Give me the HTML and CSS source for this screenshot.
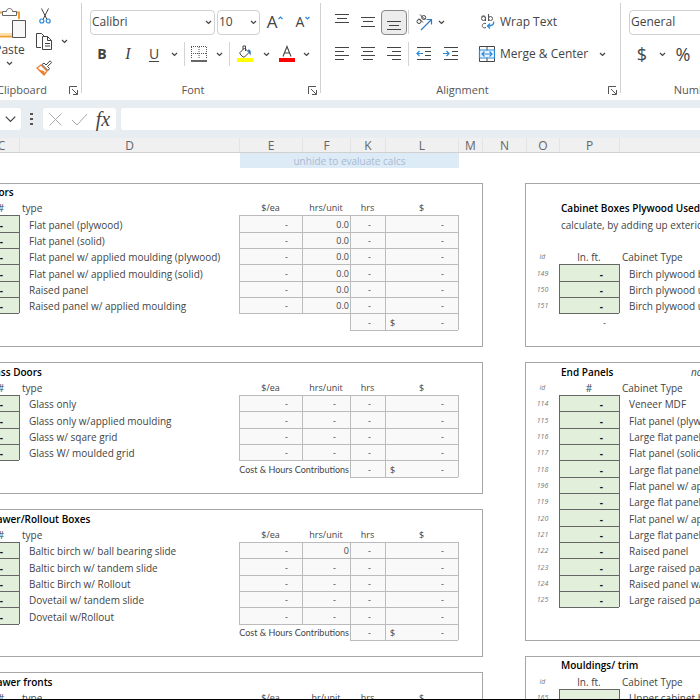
FILE: index.html
```html
<!DOCTYPE html>
<html lang="en">
<head>
<meta charset="utf-8">
<title>Cabinet estimate</title>
<link rel="stylesheet" href="styles.css">
</head>
<body>
<svg class="sprite" aria-hidden="true">
  <symbol id="chev" viewBox="0 0 7 5"><path d="M1 1l2.500 2.500L6 1" fill="none" stroke="#444" stroke-width="1.200"/></symbol>
  <symbol id="launch" viewBox="0 0 9 9"><path d="M.5 8V.5H8M3 3l5 5M8.500 4v4.500H4" fill="none" stroke="#555"/></symbol>
</svg>
<header class="ribbon">
  <section class="group clipboard">
    <div class="clip-tools">
      <button class="paste" aria-label="Paste">
        <svg width="33" height="32" viewBox="0 0 33 32"><path d="M2 6h24v24H2z" fill="#fff"/><path d="M9 5.500H1.500v24H19M22 5.500h4V12" fill="none" stroke="#f0a030" stroke-width="2"/><path d="M4 8v19h15" fill="none" stroke="#fbe0ae" stroke-width="2"/><path d="M9.500 8.500v-4h4c0-4 6-4 6 0h4v4z" fill="#fff" stroke="#666"/><path d="M19.500 13.500h13v17h-13z" fill="#f8f8f8" stroke="#555"/></svg>
        <span>Paste</span>
        <svg width="7" height="5"><use href="#chev"/></svg>
      </button>
      <div class="clip-side">
        <button aria-label="Cut"><svg width="12" height="16" viewBox="0 0 12 16"><path d="M2.500.5l5.500 11M9.500.5L4 11.500" fill="none" stroke="#444"/><circle cx="2.800" cy="13" r="2" fill="none" stroke="#2b88d8" stroke-width="1.200"/><circle cx="9.200" cy="13" r="2" fill="none" stroke="#2b88d8" stroke-width="1.200"/></svg></button>
        <button class="copy" aria-label="Copy"><svg width="17" height="17" viewBox="0 0 17 17"><path d="M5 14.500H.5V.5h5L8 3" fill="none" stroke="#444"/><path d="M6.500 3.500h5l4 4v9h-9z" fill="#fff" stroke="#444"/><path d="M11.500 3.500v4h4M9 10.500h5M9 13h5" fill="none" stroke="#444"/></svg><svg width="7" height="5"><use href="#chev"/></svg></button>
        <button aria-label="Format Painter"><svg width="17" height="16" viewBox="0 0 17 16"><path d="M1 8l7 7 3-4-6-6z" fill="#fff" stroke="#ed7d31" stroke-width="1.300"/><path d="M2 9.500l6 1.500 1 3-1 1z" fill="#ed7d31"/><path d="M6 4.500L8 3l2 2 4-4.200L15.700 2.500 11.500 6.500l2 2-1.500 2z" fill="#fff" stroke="#444"/></svg></button>
      </div>
    </div>
    <footer><span>Clipboard</span><button aria-label="Clipboard settings"><svg width="9" height="9"><use href="#launch"/></svg></button></footer>
  </section>

  <section class="group font">
    <div class="row">
      <label class="pick family"><select aria-label="Font"><option>Calibri</option></select><svg width="7" height="5"><use href="#chev"/></svg></label>
      <label class="pick size"><select aria-label="Font size"><option>10</option></select><svg width="7" height="5"><use href="#chev"/></svg></label>
      <button class="w28 grow-a" aria-label="Increase font size">A<svg width="5" height="4" viewBox="0 0 5 4"><path d="M.5 3l2-2 2 2" fill="none" stroke="#2b88d8" stroke-width="1.200"/></svg></button>
      <button class="w28 shrink-a" aria-label="Decrease font size">A<svg width="5" height="4" viewBox="0 0 5 4"><path d="M.5 1l2 2 2-2" fill="none" stroke="#2b88d8" stroke-width="1.200"/></svg></button>
    </div>
    <div class="row">
      <button class="w26 bold">B</button><button class="w26 italic">I</button><button class="w26 under">U</button>
      <button class="w14" aria-label="Underline styles"><svg width="7" height="5"><use href="#chev"/></svg></button><i class="sep"></i>
      <button class="w20" aria-label="Borders"><svg width="16" height="16" viewBox="0 0 16 16"><path d="M.5 1v12M8 1v12M15.500 1v12M0 .5h16M0 7.500h16" fill="none" stroke="#555" stroke-dasharray="1 1"/><path d="M0 15h16" stroke="#333" stroke-width="1.500"/></svg></button>
      <button class="w20" aria-label="Border styles"><svg width="7" height="5"><use href="#chev"/></svg></button><i class="sep thin"></i>
      <button class="w28" aria-label="Fill color"><svg width="16" height="16" viewBox="0 0 16 16"><path d="M0 12h16v4H0z" fill="#ff0"/><path d="M3 6.500L7.500 2l4.500 4.500L7.500 11H6L3 8z" fill="#fff" stroke="#444"/><path d="M6 3.500V0h2.500v5" fill="none" stroke="#444"/><path d="M11 3.500c3 0 3 2.500 2.500 6L11.500 6z" fill="#1f6fb5"/></svg></button>
      <button class="w14" aria-label="Fill colors"><svg width="7" height="5"><use href="#chev"/></svg></button>
      <button class="w28" aria-label="Font color"><svg width="16" height="16" viewBox="0 0 16 16"><path d="M0 12h16v4H0z" fill="red"/><path d="M4 10.500L8 .5l4 10M5.300 7h5.400" fill="none" stroke="#444" stroke-width="1.100"/></svg></button>
      <button class="w10" aria-label="Font colors"><svg width="7" height="5"><use href="#chev"/></svg></button>
    </div>
    <footer><span>Font</span><button aria-label="Font settings"><svg width="9" height="9"><use href="#launch"/></svg></button></footer>
  </section>

  <section class="group align">
    <div class="cols">
      <div class="stack">
        <div class="row">
          <button class="w26" aria-label="Top align"><svg class="up" width="16" height="16" viewBox="0 0 16 16"><path d="M1 3.500h14M3 7.500h10M1 11.500h14" stroke="#444"/></svg></button>
          <button class="w26" aria-label="Middle align"><svg width="16" height="16" viewBox="0 0 16 16"><path d="M1 3.500h14M3 7.500h10M1 12.500h14" stroke="#444"/></svg></button>
          <button class="w26 pressed" aria-label="Bottom align"><svg width="16" height="16" viewBox="0 0 16 16"><path d="M1 7.500h14M3 11.500h10M1 15.500h14" stroke="#444"/></svg></button><i class="sep thin"></i>
          <button class="w28" aria-label="Orientation"><svg width="18" height="17" viewBox="0 0 18 17"><g fill="none" stroke="#444"><circle cx="4" cy="7.500" r="2"/><path d="M4 4.500l4 4M5 .5l5 5"/><circle cx="8.700" cy="3.500" r="2"/></g><path d="M6 16L16 6M11.500 5.500h5v5" fill="none" stroke="#2b7cc0" stroke-width="1.200"/></svg></button>
          <button aria-label="Orientations"><svg width="7" height="5"><use href="#chev"/></svg></button>
        </div>
        <div class="row">
          <button class="w26" aria-label="Align left"><svg width="16" height="16" viewBox="0 0 16 16"><path d="M1 1.500h14M1 5.500h9M1 9.500h14M1 13.500h9" stroke="#444"/></svg></button>
          <button class="w26" aria-label="Center"><svg width="16" height="16" viewBox="0 0 16 16"><path d="M1 1.500h14M3 5.500h10M1 9.500h14M3 13.500h10" stroke="#444"/></svg></button>
          <button class="w26" aria-label="Align right"><svg width="16" height="16" viewBox="0 0 16 16"><path d="M1 1.500h14M6 5.500h9M1 9.500h14M6 13.500h9" stroke="#444"/></svg></button><i class="sep thin"></i>
          <button class="w28" aria-label="Decrease indent"><svg width="16" height="16" viewBox="0 0 16 16"><path d="M1 1.500h14M9 5.500h6M9 9.500h6M1 13.500h14" stroke="#444"/><path d="M7 7.500H1M3.500 5L1 7.500 3.500 10" fill="none" stroke="#2b88d8" stroke-width="1.200"/></svg></button>
          <button class="w26" aria-label="Increase indent"><svg width="16" height="16" viewBox="0 0 16 16"><path d="M1 1.500h14M9 5.500h6M9 9.500h6M1 13.500h14" stroke="#444"/><path d="M0 7.500h6M3.500 5L6 7.500 3.500 10" fill="none" stroke="#2b88d8" stroke-width="1.200"/></svg></button>
        </div>
      </div>
      <div class="stack wrap">
        <div class="row"><button class="text"><svg width="16" height="16" viewBox="0 0 16 16"><g fill="none" stroke="#555"><circle cx="4.500" cy="4.500" r="2"/><path d="M2.500 2.500c1.500-1 4-1 4 1V7M9.500 0v7M7 9.500c-5-1.500-5 6 0 4"/><circle cx="11.500" cy="4.500" r="2"/></g><path d="M14.500 7.500c1 3-2 4.500-6 4.500M11 9.500L8.500 12l2.500 2.500" fill="none" stroke="#2b88d8" stroke-width="1.300"/></svg>Wrap Text</button></div>
        <div class="row"><button class="text"><svg width="16" height="16" viewBox="0 0 16 16"><path d="M1 4.500h14v7H1z" fill="#e9f4fd"/><path d="M.5.5h15v15H.5zM8 .5v4M8 11.500v4" fill="none" stroke="#444"/><path d="M.5 4h15v8H.5zM3 8h10M5.500 5.500L3 8l2.500 2.500M10.500 5.500L13 8l-2.500 2.500" fill="none" stroke="#2b88d8" stroke-width="1.200"/></svg>Merge &amp; Center</button><button class="w28" aria-label="Merge options"><svg width="7" height="5"><use href="#chev"/></svg></button></div>
      </div>
    </div>
    <footer><span>Alignment</span><button aria-label="Alignment settings"><svg width="9" height="9"><use href="#launch"/></svg></button></footer>
  </section>

  <section class="group number">
    <div class="row"><label class="pick format"><select aria-label="Number format"><option>General</option></select></label></div>
    <div class="row"><button class="w26 sign">$</button><button class="w14" aria-label="Currencies"><svg width="7" height="5"><use href="#chev"/></svg></button><button class="w28 sign">%</button></div>
    <footer><span>Number</span></footer>
  </section>
</header>

<div class="formula">
  <button class="name" aria-label="Name box"><svg width="11" height="8" viewBox="0 0 7 5"><path d="M.5 1l3 3 3-3" fill="none" stroke="#444" stroke-width=".8"/></svg></button>
  <svg class="dots" width="3" height="12" viewBox="0 0 3 12"><path d="M0 0h3v2H0zM0 5h3v2H0zM0 10h3v2H0z" fill="#555"/></svg>
  <div class="entry">
    <button aria-label="Cancel"><svg width="13" height="13" viewBox="0 0 13 13"><path d="M.5.5l12 12M12.500.5l-12 12" stroke="#aaa"/></svg></button>
    <button aria-label="Enter"><svg width="17" height="13" viewBox="0 0 17 13"><path d="M1 7l5 5L16 1" fill="none" stroke="#aaa"/></svg></button>
    <button class="fx">fx</button>
  </div>
  <input aria-label="Formula" type="text">
</div>

<div class="letters"><span class="c">C</span><span class="d">D</span><span class="e">E</span><span class="f">F</span><span class="k">K</span><span class="l">L</span><span class="m">M</span><span class="n">N</span><span class="o">O</span><span class="p">P</span></div>

<main class="sheet">
  <div class="left">
    <div class="banner">unhide to evaluate calcs</div>

    <div class="panel">
      <table class="calc s3">
        <colgroup><col class="c"><col class="d"><col class="e"><col class="f"><col class="k"><col class="l"><col class="m"></colgroup>
        <tr><th class="title" colspan="7">Doors</th></tr>
        <tr class="head"><th>#</th><th class="type">type</th><th>$/ea</th><th>hrs/unit</th><th>hrs</th><th>$</th><th></th></tr>
        <tr class="item"><td>-</td><td>Flat panel (plywood)</td><td>-</td><td class="num">0.0</td><td>-</td><td>-</td><td></td></tr>
        <tr class="item"><td>-</td><td>Flat panel (solid)</td><td>-</td><td class="num">0.0</td><td>-</td><td>-</td><td></td></tr>
        <tr class="item"><td>-</td><td>Flat panel w/ applied moulding (plywood)</td><td>-</td><td class="num">0.0</td><td>-</td><td>-</td><td></td></tr>
        <tr class="item"><td>-</td><td>Flat panel w/ applied moulding (solid)</td><td>-</td><td class="num">0.0</td><td>-</td><td>-</td><td></td></tr>
        <tr class="item"><td>-</td><td>Raised panel</td><td>-</td><td class="num">0.0</td><td>-</td><td>-</td><td></td></tr>
        <tr class="item"><td>-</td><td>Raised panel w/ applied moulding</td><td>-</td><td class="num">0.0</td><td>-</td><td>-</td><td></td></tr>
        <tr class="total"><td></td><td></td><td class="blank" colspan="2"></td><td>-</td><td><div><span>$</span><span>-</span></div></td><td></td></tr>
        <tr class="end"><td colspan="4"></td><td colspan="2"></td><td></td></tr>
      </table>
    </div>

    <div class="panel">
      <table class="calc s1">
        <colgroup><col class="c"><col class="d"><col class="e"><col class="f"><col class="k"><col class="l"><col class="m"></colgroup>
        <tr><th class="title" colspan="7">Glass Doors</th></tr>
        <tr class="head"><th>#</th><th class="type">type</th><th>$/ea</th><th>hrs/unit</th><th>hrs</th><th>$</th><th></th></tr>
        <tr class="item"><td>-</td><td>Glass only</td><td>-</td><td>-</td><td>-</td><td>-</td><td></td></tr>
        <tr class="item"><td>-</td><td>Glass only w/applied moulding</td><td>-</td><td>-</td><td>-</td><td>-</td><td></td></tr>
        <tr class="item"><td>-</td><td>Glass w/ sqare grid</td><td>-</td><td>-</td><td>-</td><td>-</td><td></td></tr>
        <tr class="item"><td>-</td><td>Glass W/ moulded grid</td><td>-</td><td>-</td><td>-</td><td>-</td><td></td></tr>
        <tr class="total"><td></td><td></td><td colspan="2">Cost &amp; Hours Contributions</td><td>-</td><td><div><span>$</span><span>-</span></div></td><td></td></tr>
        <tr class="end"><td colspan="4"></td><td colspan="2"></td><td></td></tr>
      </table>
    </div>

    <div class="panel">
      <table class="calc s1">
        <colgroup><col class="c"><col class="d"><col class="e"><col class="f"><col class="k"><col class="l"><col class="m"></colgroup>
        <tr><th class="title" colspan="7">Drawer/Rollout Boxes</th></tr>
        <tr class="head"><th>#</th><th class="type">type</th><th>$/ea</th><th>hrs/unit</th><th>hrs</th><th>$</th><th></th></tr>
        <tr class="item"><td>-</td><td>Baltic birch w/ ball bearing slide</td><td>-</td><td class="num">0</td><td>-</td><td>-</td><td></td></tr>
        <tr class="item"><td>-</td><td>Baltic birch w/ tandem slide</td><td>-</td><td>-</td><td>-</td><td>-</td><td></td></tr>
        <tr class="item"><td>-</td><td>Baltic Birch w/ Rollout</td><td>-</td><td>-</td><td>-</td><td>-</td><td></td></tr>
        <tr class="item"><td>-</td><td>Dovetail w/ tandem slide</td><td>-</td><td>-</td><td>-</td><td>-</td><td></td></tr>
        <tr class="item"><td>-</td><td>Dovetail w/Rollout</td><td>-</td><td>-</td><td>-</td><td>-</td><td></td></tr>
        <tr class="total"><td></td><td></td><td colspan="2">Cost &amp; Hours Contributions</td><td>-</td><td><div><span>$</span><span>-</span></div></td><td></td></tr>
        <tr class="end"><td colspan="4"></td><td colspan="2"></td><td></td></tr>
      </table>
    </div>

    <div class="panel">
      <table class="calc s1">
        <colgroup><col class="c"><col class="d"><col class="e"><col class="f"><col class="k"><col class="l"><col class="m"></colgroup>
        <tr><th class="title" colspan="7">Drawer fronts</th></tr>
        <tr class="head"><th>#</th><th class="type">type</th><th>$/ea</th><th>hr/unit</th><th>hrs</th><th>$</th><th></th></tr>
      </table>
    </div>
  </div>

  <div class="right">
    <div class="panel">
      <table class="list s3">
        <colgroup><col class="o"><col class="p"><col class="q"><col></colgroup>
        <tr><td colspan="4"></td></tr>
        <tr><td></td><th class="title" colspan="3">Cabinet Boxes Plywood Used</th></tr>
        <tr><td></td><td class="hint" colspan="3">calculate, by adding up exterior</td></tr>
        <tr><td colspan="4"></td></tr>
        <tr class="head"><th class="id">id</th><th>ln. ft.</th><th class="type" colspan="2">Cabinet Type</th></tr>
        <tr class="item"><td>149</td><td>-</td><td colspan="2">Birch plywood base</td></tr>
        <tr class="item"><td>150</td><td>-</td><td colspan="2">Birch plywood upper</td></tr>
        <tr class="item"><td>151</td><td>-</td><td colspan="2">Birch plywood utility</td></tr>
        <tr class="sum"><td></td><td>-</td><td colspan="2"></td></tr>
        <tr><td colspan="4"></td></tr>
      </table>
    </div>

    <div class="panel">
      <table class="list s1">
        <colgroup><col class="o"><col class="p"><col class="q"><col></colgroup>
        <tr><td></td><th class="title" colspan="2">End Panels</th><td class="note">note</td></tr>
        <tr class="head"><th class="id">id</th><th>#</th><th class="type" colspan="2">Cabinet Type</th></tr>
        <tr class="item"><td>114</td><td>-</td><td colspan="2">Veneer MDF</td></tr>
        <tr class="item"><td>115</td><td>-</td><td colspan="2">Flat panel (plywood)</td></tr>
        <tr class="item"><td>116</td><td>-</td><td colspan="2">Large flat panel (plywood)</td></tr>
        <tr class="item"><td>117</td><td>-</td><td colspan="2">Flat panel (solid)</td></tr>
        <tr class="item"><td>118</td><td>-</td><td colspan="2">Large flat panel (solid)</td></tr>
        <tr class="item"><td>196</td><td>-</td><td colspan="2">Flat panel w/ applied moulding</td></tr>
        <tr class="item"><td>119</td><td>-</td><td colspan="2">Large flat panel w/ applied moulding</td></tr>
        <tr class="item"><td>120</td><td>-</td><td colspan="2">Flat panel w/ applied moulding</td></tr>
        <tr class="item"><td>121</td><td>-</td><td colspan="2">Large flat panel w/ applied moulding</td></tr>
        <tr class="item"><td>122</td><td>-</td><td colspan="2">Raised panel</td></tr>
        <tr class="item"><td>123</td><td>-</td><td colspan="2">Large raised panel</td></tr>
        <tr class="item"><td>124</td><td>-</td><td colspan="2">Raised panel w/ applied moulding</td></tr>
        <tr class="item"><td>125</td><td>-</td><td colspan="2">Large raised panel w/ applied moulding</td></tr>
        <tr class="sum"><td></td><td></td><td colspan="2"></td></tr>
        <tr><td colspan="4"></td></tr>
      </table>
    </div>

    <div class="panel">
      <table class="list s2">
        <colgroup><col class="o"><col class="p"><col class="q"><col></colgroup>
        <tr><td></td><th class="title" colspan="3">Mouldings/ trim</th></tr>
        <tr class="head"><th class="id">id</th><th>ln. ft.</th><th class="type" colspan="2">Cabinet Type</th></tr>
        <tr class="item"><td>165</td><td>-</td><td colspan="2">Upper cabinet base</td></tr>
      </table>
    </div>
  </div>
</main>
</body>
</html>
```

FILE: styles.css
```css
* { box-sizing: border-box; }
body {
  margin: 0;
  height: 100vh;
  display: flex;
  flex-direction: column;
  overflow: hidden;
  border-bottom: 1px solid #000;
  background: #fff;
  color: #444;
  font: 12px/16px "Open Sans", "Noto Sans", sans-serif;
}
.sprite { position: absolute; width: 0; height: 0; }
button {
  display: flex;
  align-items: center;
  justify-content: center;
  flex: none;
  padding: 0;
  border: 0;
  background: none;
  color: inherit;
  font: inherit;
}
svg { display: block; flex: none; overflow: visible; }

/* Ribbon */
.ribbon { display: flex; flex: none; height: 100px; margin-left: -21px; overflow: hidden; }
.group { position: relative; flex: none; padding: 6px 0 0; }
.group:not(.number)::after {
  content: "";
  position: absolute;
  top: 3px;
  right: 0;
  bottom: 7px;
  border-right: 1px solid #d0d0d0;
}
.clipboard { width: 103px; }
.font { width: 239px; padding-left: 7px; }
.align { width: 300px; padding-left: 8px; }
.number { width: 156px; padding-left: 8px; }
.row { display: flex; align-items: center; height: 32px; }
.cols { display: flex; }
.group footer {
  position: absolute;
  left: 0;
  right: 0;
  bottom: 2px;
  display: flex;
  align-items: center;
  padding: 0 4px 0 0;
  font-size: 11px;
  color: #555;
}
.group footer span { flex: 1; padding-right: 4px; text-align: center; }
.w10 { width: 10px; }
.w14 { width: 14px; }
.w20 { width: 20px; }
.w26 { width: 26px; }
.w28 { width: 28px; }
.sep { width: 1px; height: 24px; margin: 0 4px 0 3px; background: #d4d4d4; }
.sep.thin { margin: 0 1px 0 0; }

.clip-tools { display: flex; padding: 1px 0 0 14px; }
.paste { flex-direction: column; justify-content: flex-start; width: 33px; gap: 3px; }
.clip-side { display: flex; flex-direction: column; gap: 9px; padding-left: 10px; }
.clip-side button { width: 17px; height: 17px; }
.clip-side .copy { width: 32px; gap: 8px; justify-content: flex-start; }

.pick {
  display: flex;
  align-items: center;
  height: 25px;
  border: 1px solid #d0d0d0;
  border-radius: 4px;
  padding-right: 2px;
}
.pick select {
  flex: 1;
  min-width: 0;
  height: 22px;
  padding: 0 1px;
  border: 0;
  outline: 0;
  background: none;
  appearance: none;
  color: #444;
  font: inherit;
}
.family { width: 125px; margin: 0 2px 0 1px; }
.size { width: 43px; }
.format { width: 148px; }
.grow-a, .shrink-a { align-items: flex-start; gap: 1px; font-size: 17px; line-height: 20px; }
.grow-a { margin-left: 1px; }
.shrink-a { font-size: 14px; }
.grow-a svg, .shrink-a svg { margin-top: 4px; }
.bold { font-size: 14px; font-weight: 700; }
.italic { font: italic 16px "Liberation Serif", serif; }
.under { font-size: 14px; text-decoration: underline; text-underline-offset: 2px; }
.pressed { height: 25px; border: 1px solid #888; border-radius: 4px; background: #ececec; }
.up { margin-top: -6px; }
.align .sep.thin { margin: 0 1px; }
.wrap { margin-left: 7px; padding-left: 8px; }
.text { gap: 5px; }
.sign { font-size: 18px; }

/* Formula bar */
.formula {
  display: flex;
  flex: none;
  align-items: center;
  padding: 8px 0;
  background: #e7edf0;
}
.formula .name { width: 21px; height: 22px; border-radius: 0 3px 3px 0; background: #fff; }
.dots { margin: 0 10px 0 9px; }
.entry { display: flex; align-items: center; width: 73px; height: 22px; border-radius: 3px; background: #fff; }
.entry button { width: 24px; }
.fx { font: italic 20px/20px "Liberation Serif", serif; }
.formula input {
  flex: 1;
  min-width: 0;
  height: 22px;
  margin-left: 5px;
  border: 0;
  border-radius: 3px 0 0 3px;
  outline: 0;
  background: #fff;
}

/* Column letters */
.letters {
  display: flex;
  flex: none;
  height: 15px;
  margin-left: -16px;
  border-bottom: 1px solid #d0d0d0;
  background: #f0f0f0;
  color: #666;
  line-height: 15px;
  text-align: center;
}
.letters span { flex: none; border-right: 1px solid #e4e4e4; }
.c { width: 36px; }
.d { width: 220px; }
.e { width: 63px; }
.f { width: 48px; }
.k { width: 35px; }
.l { width: 73px; }
.m { width: 24px; }
.n { width: 44px; }
.o { width: 33px; }
.p { width: 60px; }
.q { width: 69px; }

/* Sheet */
.sheet {
  display: flex;
  align-items: flex-start;
  gap: 42px;
  flex: 1;
  min-height: 0;
  margin-left: -18px;
  overflow: hidden;
  font-size: 10px;
}
.left, .right { display: flex; flex-direction: column; gap: 15px; }
.left { flex: none; width: 501px; }
.right { flex: 1; min-width: 0; padding-top: 30px; }
.banner {
  height: 15px;
  margin: 0 24px 0 258px;
  background: #ddebf7;
  color: #a9b9d2;
  line-height: 16px;
  text-align: center;
}
.panel { border: 1px solid #a6a6a6; }
.right .panel { border-right: 0; }
table { width: 100%; margin-top: -1px; table-layout: fixed; border-spacing: 0; }
td, th {
  height: 16px;
  padding: 0;
  overflow: hidden;
  font-weight: 400;
  line-height: 14px;
  text-align: center;
  vertical-align: bottom;
  white-space: nowrap;
}
/* Rows run 16, 16, 17; the class says where the tall one falls. */
.s1 tr:nth-child(3n+1) > *,
.s2 tr:nth-child(3n+2) > *,
.s3 tr:nth-child(3n) > * { height: 17px; }
.title { padding-left: 2px; color: #000; font-weight: 600; text-align: left; }
.head .type { padding-left: 3px; text-align: left; }
.hint { padding-left: 2px; text-align: left; }
.note { padding-left: 3px; font-style: italic; text-align: left; }

.calc .head th:nth-child(n+3) { font-size: 9px; }
.calc .item td:first-child,
.list .item td:nth-child(2) {
  padding-right: 16px;
  border: 1px solid #666;
  border-width: 1px 0 0 1px;
  background: #e2efda;
  color: #111;
  font-weight: 700;
  text-align: right;
}
.calc .item td:nth-child(2),
.list .item td:nth-child(3) { padding-left: 9px; border-left: 1px solid #666; text-align: left; }
.calc .item td:nth-child(n+3):nth-child(-n+6),
.total td:nth-child(n+4):nth-child(-n+5) {
  padding-right: 14px;
  border: 1px solid #bbb;
  border-width: 1px 0 0 1px;
  background: #f9f9f9;
  font-size: 9px;
  text-align: right;
}
.calc .item td.num:nth-child(4):nth-child(n) { padding-right: 1px; }
.item td:nth-child(7), .total td:nth-child(6) { border-left: 1px solid #bbb; }
.total td:nth-child(1) { border-top: 1px solid #666; }
.total td:nth-child(3) { padding-right: 1px; border-top: 1px solid #bbb; font-family: Lato, sans-serif; font-size: 9px; text-align: right; }
.total div { display: flex; justify-content: space-between; padding-left: 4px; }
.end td:nth-child(2) { border-top: 1px solid #bbb; }

.list .id, .list .item td:first-child { color: #777; font-size: 7px; font-style: italic; }
.sum td:nth-child(2) { padding-right: 13px; border-top: 1px solid #666; font-size: 9px; text-align: right; }
```
